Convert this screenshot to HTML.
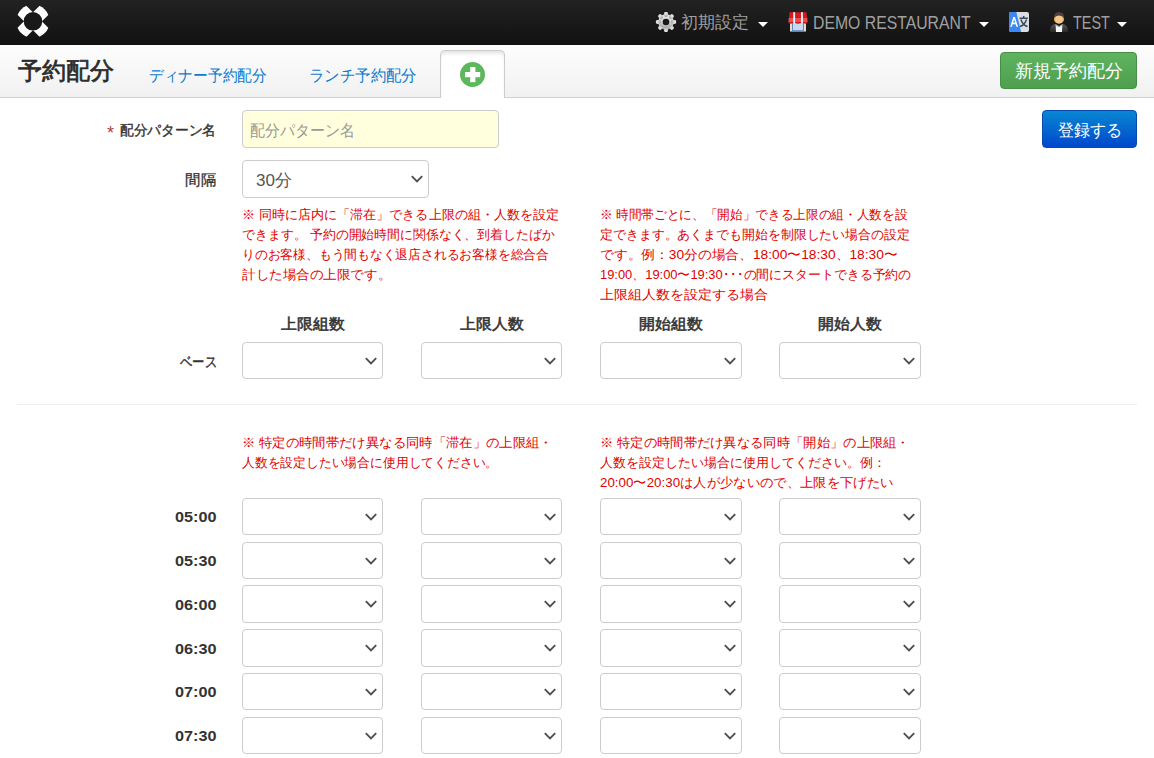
<!DOCTYPE html>
<html lang="ja">
<head>
<meta charset="utf-8">
<style>
*{box-sizing:border-box;margin:0;padding:0}
html,body{width:1154px;height:758px;overflow:hidden;background:#fff}
body{font-family:"Liberation Sans",sans-serif;color:#333;font-size:14px;position:relative}
.abs{position:absolute}
#nav{position:absolute;left:0;top:0;width:1154px;height:45px;background:linear-gradient(#222,#111)}
#sub{position:absolute;left:0;top:45px;width:1154px;height:53px;background:linear-gradient(#fdfdfd,#f1f1f1);border-bottom:1px solid #d0d0d0}
.navtxt{position:absolute;top:11px;color:#a0a0a0;font-size:17px;line-height:22px;white-space:nowrap}
.lat{font-size:18px;transform-origin:0 0}
.caret{position:absolute;width:0;height:0;border-left:5px solid transparent;border-right:5px solid transparent;border-top:5px solid #fff}
.title{position:absolute;left:18px;top:55px;font-size:24px;line-height:32px;color:#2b2b2b;font-weight:normal;-webkit-text-stroke:.7px #2b2b2b}
.tab{position:absolute;top:64.5px;font-size:16px;line-height:22px;color:#0b7bcf;white-space:nowrap;transform-origin:0 0}
.acttab{position:absolute;left:440px;top:50px;width:65px;height:48px;background:#fff;border:1px solid #ccc;border-bottom:none;border-radius:5px 5px 0 0;box-shadow:inset 0 4px 4px -2px rgba(0,0,0,.13)}
.btn{position:absolute;color:#fff;font-size:17px;text-align:center;border-radius:4px}
.lbl{position:absolute;right:938px;font-size:14px;font-weight:normal;-webkit-text-stroke:.5px #333;color:#333;white-space:nowrap;text-align:right;line-height:20px}
.inp{position:absolute;border:1px solid #ccc;border-radius:4px;background:#fff}
.sel{position:absolute;height:36.5px;width:141px;border:1px solid #ccc;border-radius:4px;background:#fff}
.sel svg{position:absolute;right:5px;top:14px}
.help{position:absolute;color:#e00000;font-size:13px;line-height:20px;white-space:nowrap}
.hl{position:absolute;color:#e00000;font-size:13px;line-height:20px;white-space:nowrap;transform-origin:0 0}
.colh{position:absolute;top:312.5px;font-size:15px;transform:scaleX(1.06);font-weight:normal;-webkit-text-stroke:.55px #333;color:#333;text-align:center;width:141.5px;line-height:22px}
.time{position:absolute;left:156px;width:60.5px;text-align:right;font-size:15px;transform:scaleX(1.08);transform-origin:100% 0;font-weight:bold;color:#333;line-height:20px}
</style>
</head>
<body>
<div id="nav">
  <svg class="abs" style="left:0;top:0" width="60" height="44" viewBox="0 0 60 44">
    <defs><clipPath id="lc"><circle cx="32.95" cy="21.3" r="16.7"/></clipPath></defs>
    <g clip-path="url(#lc)" fill="#fff">
      <rect x="10" y="15" width="46" height="12.6" transform="rotate(45 32.95 21.3)" />
      <rect x="10" y="15" width="46" height="12.6" transform="rotate(-45 32.95 21.3)" />
    </g>
    <circle cx="32.95" cy="21.3" r="9.3" fill="#191919"/>
  </svg>
  <svg class="abs" style="left:655px;top:11px" width="22" height="22" viewBox="0 0 22 22">
    <defs><linearGradient id="gg" x1="0" y1="0" x2="0" y2="1"><stop offset="0" stop-color="#ececec"/><stop offset="0.5" stop-color="#d2d2d2"/><stop offset="1" stop-color="#a0a0a0"/></linearGradient></defs>
    <g fill="url(#gg)">
      <circle cx="11" cy="11" r="7.8"/><rect x="9.1" y="0.9" width="3.8" height="5" rx="1.4" transform="rotate(0 11 11)"/><rect x="9.1" y="0.9" width="3.8" height="5" rx="1.4" transform="rotate(45 11 11)"/><rect x="9.1" y="0.9" width="3.8" height="5" rx="1.4" transform="rotate(90 11 11)"/><rect x="9.1" y="0.9" width="3.8" height="5" rx="1.4" transform="rotate(135 11 11)"/><rect x="9.1" y="0.9" width="3.8" height="5" rx="1.4" transform="rotate(180 11 11)"/><rect x="9.1" y="0.9" width="3.8" height="5" rx="1.4" transform="rotate(225 11 11)"/><rect x="9.1" y="0.9" width="3.8" height="5" rx="1.4" transform="rotate(270 11 11)"/><rect x="9.1" y="0.9" width="3.8" height="5" rx="1.4" transform="rotate(315 11 11)"/>
    </g>
    <circle cx="11" cy="11" r="3.3" fill="#1a1a1a"/>
  </svg>
  <svg class="abs" style="left:788px;top:12px" width="20" height="20" viewBox="0 0 20 20">
    <rect x="2" y="10" width="16" height="9.5" fill="#e8dccb"/>
    <rect x="4" y="10" width="12" height="9.5" fill="#c8d8ee"/>
    <rect x="4" y="18.3" width="12" height="1.5" fill="#4f7fb8"/>
    <rect x="4" y="10" width="1" height="9.5" fill="#5d8ac4"/><rect x="15" y="10" width="1" height="9.5" fill="#5d8ac4"/>
    <path d="M1.5 0.2H18.5L19.6 11Q17.3 12.3 15 11L13 11Q10 12.5 7 11L5 11Q2.7 12.3 0.4 11Z" fill="#d81818"/>
    <rect x="5.2" y="0.2" width="1.9" height="11" fill="#e4ecf8"/>
    <rect x="13" y="0.2" width="1.9" height="11" fill="#e4ecf8"/>
    <rect x="0.5" y="6" width="19" height="4" fill="#fff" opacity=".25"/>
  </svg>
  <svg class="abs" style="left:1009px;top:12px" width="20" height="20" viewBox="0 0 20 20">
    <defs><clipPath id="tc"><rect x="0" y="0" width="20" height="20" rx="2"/></clipPath></defs>
    <g clip-path="url(#tc)">
      <rect width="20" height="20" fill="#d9dfe3"/>
      <path d="M0 0H7.3L12.1 20H0Z" fill="#3b88f0"/>
    </g>
    <path d="M1.2 14.8L4.3 5H5.9L9.1 14.8H7.4L6.6 12.2H3.6L2.8 14.8Z M4.1 10.6H6.1L5.1 7.2Z" fill="#fff"/>
    <path d="M10.6 6.2H18.8 M14.7 3.9V6.2 M11.8 7.5Q14.2 13.5 18.6 14.6 M17.6 7.5Q15.2 13.5 10.8 14.6" stroke="#3a4a5a" stroke-width="1.5" fill="none"/>
  </svg>
  <svg class="abs" style="left:1049px;top:12px" width="20" height="20" viewBox="0 0 20 20">
    <defs><linearGradient id="su" x1="0" y1="0" x2="0" y2="1"><stop offset="0" stop-color="#555"/><stop offset="1" stop-color="#2a2a2a"/></linearGradient></defs>
    <path d="M1.2 20V17Q1.5 13.2 6 12L10 14.5L14 12Q18.5 13.2 18.8 17V20Z" fill="url(#su)"/>
    <path d="M6.6 12.3L10 14.3L13.4 12.3L13 20H7Z" fill="#f6f6f6"/>
    <path d="M6.6 12.3L10 14.3L13.4 12.3L13.2 13.6L10 15.2L6.8 13.6Z" fill="#9a9a9a"/>
    <ellipse cx="10" cy="6.9" rx="5.1" ry="4.9" fill="#e3a23a"/>
    <ellipse cx="10" cy="7.3" rx="3.9" ry="4.1" fill="#f2c78f"/>
    <path d="M4.9 6.3Q4.7 0 10 0Q15.3 0 15.1 6.3Q13.5 3.6 10 3.6Q6.5 3.6 4.9 6.3Z" fill="#4e403c"/>
  </svg>
  <div class="navtxt" style="left:681px;top:12px">初期設定</div>
  <div class="caret" style="left:758px;top:22px"></div>
  <div class="navtxt lat" style="left:813px;top:12px;transform:scaleX(.877)">DEMO RESTAURANT</div>
  <div class="caret" style="left:979px;top:22px"></div>
  <div class="navtxt lat" style="left:1073px;top:12px;transform:scaleX(.80)">TEST</div>
  <div class="caret" style="left:1117px;top:22px"></div>
</div>
<div id="sub"></div>
<div class="title">予約配分</div>
<div class="tab" style="left:149px;transform:scaleX(.92)">ディナー予約配分</div>
<div class="tab" style="left:309px;transform:scaleX(.962)">ランチ予約配分</div>
<div class="acttab"></div>
<svg class="abs" style="left:460px;top:62px" width="25" height="25" viewBox="0 0 25 25"><circle cx="12.5" cy="12.5" r="12.5" fill="#5cb85c"/><rect x="10.2" y="5" width="5.2" height="15.2" fill="#fff"/><rect x="5" y="10" width="15.2" height="5.2" fill="#fff"/></svg>
<div class="btn" style="left:1000px;top:52px;width:137px;height:37px;background:linear-gradient(#5fb35f,#4e9f4e);border:1px solid #469046;line-height:36px;font-size:18px">新規予約配分</div>

<div class="lbl" style="top:120px;-webkit-text-stroke:.4px #333;transform:scaleX(.98);transform-origin:100% 0">配分パターン名</div>
<div class="abs" style="left:107px;top:122.5px;font-size:18px;line-height:20px;color:#a94442">*</div>
<div class="inp" style="left:242px;top:110px;width:257px;height:38px;background:#ffffdd"><span style="position:absolute;left:7px;top:9.5px;font-size:16px;line-height:20px;color:#999;transform:scaleX(.935);transform-origin:0 0;white-space:nowrap">配分パターン名</span></div>
<div class="btn" style="left:1042px;top:110px;width:95px;height:38px;background:linear-gradient(#0887d3,#0048cc);border:1px solid #0a49b0;line-height:39px;font-size:16.5px"><span style="display:inline-block;transform:scaleX(.945)">登録する</span></div>

<div class="lbl" style="top:170px;font-size:15px;-webkit-text-stroke:.3px #333;transform:scaleX(1.03);transform-origin:100% 0">間隔</div>
<div class="inp" style="left:242px;top:160px;width:187px;height:38px"><span style="position:absolute;left:13px;top:10px;font-size:17px;line-height:20px;color:#555">30分</span><svg style="position:absolute;right:5px;top:14px" width="12" height="8" viewBox="0 0 12 8"><path d="M0.8 1.1L6 6.3L11.2 1.1" fill="none" stroke="#4e4e4e" stroke-width="1.9"/></svg></div>


<div class="hl" id="h0_0" style="left:242px;top:205px;transform:scaleX(1.0048)">※ 同時に店内に「滞在」できる上限の組・人数を設定</div>
<div class="hl" id="h0_1" style="left:242px;top:225px;transform:scaleX(0.9905)">できます。 予約の開始時間に関係なく、到着したばか</div>
<div class="hl" id="h0_2" style="left:242px;top:245px;transform:scaleX(0.9839)">りのお客様、もう間もなく退店されるお客様を総合合</div>
<div class="hl" id="h0_3" style="left:242px;top:265px;transform:scaleX(1.0425)">計した場合の上限です。</div>
<div class="hl" id="h1_0" style="left:600px;top:205px;transform:scaleX(0.9733)">※ 時間帯ごとに、「開始」できる上限の組・人数を設</div>
<div class="hl" id="h1_1" style="left:600px;top:225px;transform:scaleX(0.9929)">定できます。あくまでも開始を制限したい場合の設定</div>
<div class="hl" id="h1_2" style="left:600px;top:245px;transform:scaleX(1.0589)">です。例：30分の場合、18:00〜18:30、18:30〜</div>
<div class="hl" id="h1_3" style="left:600px;top:265px;transform:scaleX(0.9927)">19:00、19:00〜19:30･･･の間にスタートできる予約の</div>
<div class="hl" id="h1_4" style="left:600px;top:285px;transform:scaleX(1.0800)">上限組人数を設定する場合</div>
<div class="hl" id="h2_0" style="left:242px;top:432.5px;transform:scaleX(1.0268)">※ 特定の時間帯だけ異なる同時「滞在」の上限組・</div>
<div class="hl" id="h2_1" style="left:242px;top:452.5px;transform:scaleX(0.9853)">人数を設定したい場合に使用してください。</div>
<div class="hl" id="h3_0" style="left:600px;top:432.5px;transform:scaleX(1.0235)">※ 特定の時間帯だけ異なる同時「開始」の上限組・</div>
<div class="hl" id="h3_1" style="left:600px;top:452.5px;transform:scaleX(0.9993)">人数を設定したい場合に使用してください。例：</div>
<div class="hl" id="h3_2" style="left:600px;top:472.5px;transform:scaleX(1.0256)">20:00〜20:30は人が少ないので、上限を下げたい</div>
<div class="colh" style="left:242px">上限組数</div>
<div class="colh" style="left:421px">上限人数</div>
<div class="colh" style="left:600px">開始組数</div>
<div class="colh" style="left:779px">開始人数</div>

<div class="lbl" style="top:351.5px;right:937px;font-size:15px;-webkit-text-stroke:.4px #333;transform:scaleX(.82);transform-origin:100% 0">ベース</div>
<div class="sel" style="left:242px;top:342px;height:37px;width:141px"><svg width="12" height="8" viewBox="0 0 12 8"><path d="M0.8 1.1L6 6.3L11.2 1.1" fill="none" stroke="#4e4e4e" stroke-width="1.9"/></svg></div><div class="sel" style="left:421px;top:342px;height:37px;width:141px"><svg width="12" height="8" viewBox="0 0 12 8"><path d="M0.8 1.1L6 6.3L11.2 1.1" fill="none" stroke="#4e4e4e" stroke-width="1.9"/></svg></div><div class="sel" style="left:600px;top:342px;height:37px;width:142px"><svg width="12" height="8" viewBox="0 0 12 8"><path d="M0.8 1.1L6 6.3L11.2 1.1" fill="none" stroke="#4e4e4e" stroke-width="1.9"/></svg></div><div class="sel" style="left:779px;top:342px;height:37px;width:142px"><svg width="12" height="8" viewBox="0 0 12 8"><path d="M0.8 1.1L6 6.3L11.2 1.1" fill="none" stroke="#4e4e4e" stroke-width="1.9"/></svg></div>

<div class="abs" style="left:17px;top:404px;width:1120px;height:1px;background:#eee"></div>


<div class="time" style="top:507.0px">05:00</div><div class="sel" style="left:242px;top:498px;height:37px;width:141px"><svg width="12" height="8" viewBox="0 0 12 8"><path d="M0.8 1.1L6 6.3L11.2 1.1" fill="none" stroke="#4e4e4e" stroke-width="1.9"/></svg></div><div class="sel" style="left:421px;top:498px;height:37px;width:141px"><svg width="12" height="8" viewBox="0 0 12 8"><path d="M0.8 1.1L6 6.3L11.2 1.1" fill="none" stroke="#4e4e4e" stroke-width="1.9"/></svg></div><div class="sel" style="left:600px;top:498px;height:37px;width:142px"><svg width="12" height="8" viewBox="0 0 12 8"><path d="M0.8 1.1L6 6.3L11.2 1.1" fill="none" stroke="#4e4e4e" stroke-width="1.9"/></svg></div><div class="sel" style="left:779px;top:498px;height:37px;width:142px"><svg width="12" height="8" viewBox="0 0 12 8"><path d="M0.8 1.1L6 6.3L11.2 1.1" fill="none" stroke="#4e4e4e" stroke-width="1.9"/></svg></div><div class="time" style="top:551.0px">05:30</div><div class="sel" style="left:242px;top:542px;height:37px;width:141px"><svg width="12" height="8" viewBox="0 0 12 8"><path d="M0.8 1.1L6 6.3L11.2 1.1" fill="none" stroke="#4e4e4e" stroke-width="1.9"/></svg></div><div class="sel" style="left:421px;top:542px;height:37px;width:141px"><svg width="12" height="8" viewBox="0 0 12 8"><path d="M0.8 1.1L6 6.3L11.2 1.1" fill="none" stroke="#4e4e4e" stroke-width="1.9"/></svg></div><div class="sel" style="left:600px;top:542px;height:37px;width:142px"><svg width="12" height="8" viewBox="0 0 12 8"><path d="M0.8 1.1L6 6.3L11.2 1.1" fill="none" stroke="#4e4e4e" stroke-width="1.9"/></svg></div><div class="sel" style="left:779px;top:542px;height:37px;width:142px"><svg width="12" height="8" viewBox="0 0 12 8"><path d="M0.8 1.1L6 6.3L11.2 1.1" fill="none" stroke="#4e4e4e" stroke-width="1.9"/></svg></div><div class="time" style="top:594.5px">06:00</div><div class="sel" style="left:242px;top:585px;height:38px;width:141px"><svg width="12" height="8" viewBox="0 0 12 8"><path d="M0.8 1.1L6 6.3L11.2 1.1" fill="none" stroke="#4e4e4e" stroke-width="1.9"/></svg></div><div class="sel" style="left:421px;top:585px;height:38px;width:141px"><svg width="12" height="8" viewBox="0 0 12 8"><path d="M0.8 1.1L6 6.3L11.2 1.1" fill="none" stroke="#4e4e4e" stroke-width="1.9"/></svg></div><div class="sel" style="left:600px;top:585px;height:38px;width:142px"><svg width="12" height="8" viewBox="0 0 12 8"><path d="M0.8 1.1L6 6.3L11.2 1.1" fill="none" stroke="#4e4e4e" stroke-width="1.9"/></svg></div><div class="sel" style="left:779px;top:585px;height:38px;width:142px"><svg width="12" height="8" viewBox="0 0 12 8"><path d="M0.8 1.1L6 6.3L11.2 1.1" fill="none" stroke="#4e4e4e" stroke-width="1.9"/></svg></div><div class="time" style="top:638.5px">06:30</div><div class="sel" style="left:242px;top:629px;height:38px;width:141px"><svg width="12" height="8" viewBox="0 0 12 8"><path d="M0.8 1.1L6 6.3L11.2 1.1" fill="none" stroke="#4e4e4e" stroke-width="1.9"/></svg></div><div class="sel" style="left:421px;top:629px;height:38px;width:141px"><svg width="12" height="8" viewBox="0 0 12 8"><path d="M0.8 1.1L6 6.3L11.2 1.1" fill="none" stroke="#4e4e4e" stroke-width="1.9"/></svg></div><div class="sel" style="left:600px;top:629px;height:38px;width:142px"><svg width="12" height="8" viewBox="0 0 12 8"><path d="M0.8 1.1L6 6.3L11.2 1.1" fill="none" stroke="#4e4e4e" stroke-width="1.9"/></svg></div><div class="sel" style="left:779px;top:629px;height:38px;width:142px"><svg width="12" height="8" viewBox="0 0 12 8"><path d="M0.8 1.1L6 6.3L11.2 1.1" fill="none" stroke="#4e4e4e" stroke-width="1.9"/></svg></div><div class="time" style="top:682.0px">07:00</div><div class="sel" style="left:242px;top:673px;height:37px;width:141px"><svg width="12" height="8" viewBox="0 0 12 8"><path d="M0.8 1.1L6 6.3L11.2 1.1" fill="none" stroke="#4e4e4e" stroke-width="1.9"/></svg></div><div class="sel" style="left:421px;top:673px;height:37px;width:141px"><svg width="12" height="8" viewBox="0 0 12 8"><path d="M0.8 1.1L6 6.3L11.2 1.1" fill="none" stroke="#4e4e4e" stroke-width="1.9"/></svg></div><div class="sel" style="left:600px;top:673px;height:37px;width:142px"><svg width="12" height="8" viewBox="0 0 12 8"><path d="M0.8 1.1L6 6.3L11.2 1.1" fill="none" stroke="#4e4e4e" stroke-width="1.9"/></svg></div><div class="sel" style="left:779px;top:673px;height:37px;width:142px"><svg width="12" height="8" viewBox="0 0 12 8"><path d="M0.8 1.1L6 6.3L11.2 1.1" fill="none" stroke="#4e4e4e" stroke-width="1.9"/></svg></div><div class="time" style="top:726.0px">07:30</div><div class="sel" style="left:242px;top:717px;height:37px;width:141px"><svg width="12" height="8" viewBox="0 0 12 8"><path d="M0.8 1.1L6 6.3L11.2 1.1" fill="none" stroke="#4e4e4e" stroke-width="1.9"/></svg></div><div class="sel" style="left:421px;top:717px;height:37px;width:141px"><svg width="12" height="8" viewBox="0 0 12 8"><path d="M0.8 1.1L6 6.3L11.2 1.1" fill="none" stroke="#4e4e4e" stroke-width="1.9"/></svg></div><div class="sel" style="left:600px;top:717px;height:37px;width:142px"><svg width="12" height="8" viewBox="0 0 12 8"><path d="M0.8 1.1L6 6.3L11.2 1.1" fill="none" stroke="#4e4e4e" stroke-width="1.9"/></svg></div><div class="sel" style="left:779px;top:717px;height:37px;width:142px"><svg width="12" height="8" viewBox="0 0 12 8"><path d="M0.8 1.1L6 6.3L11.2 1.1" fill="none" stroke="#4e4e4e" stroke-width="1.9"/></svg></div>
</body>
</html>
